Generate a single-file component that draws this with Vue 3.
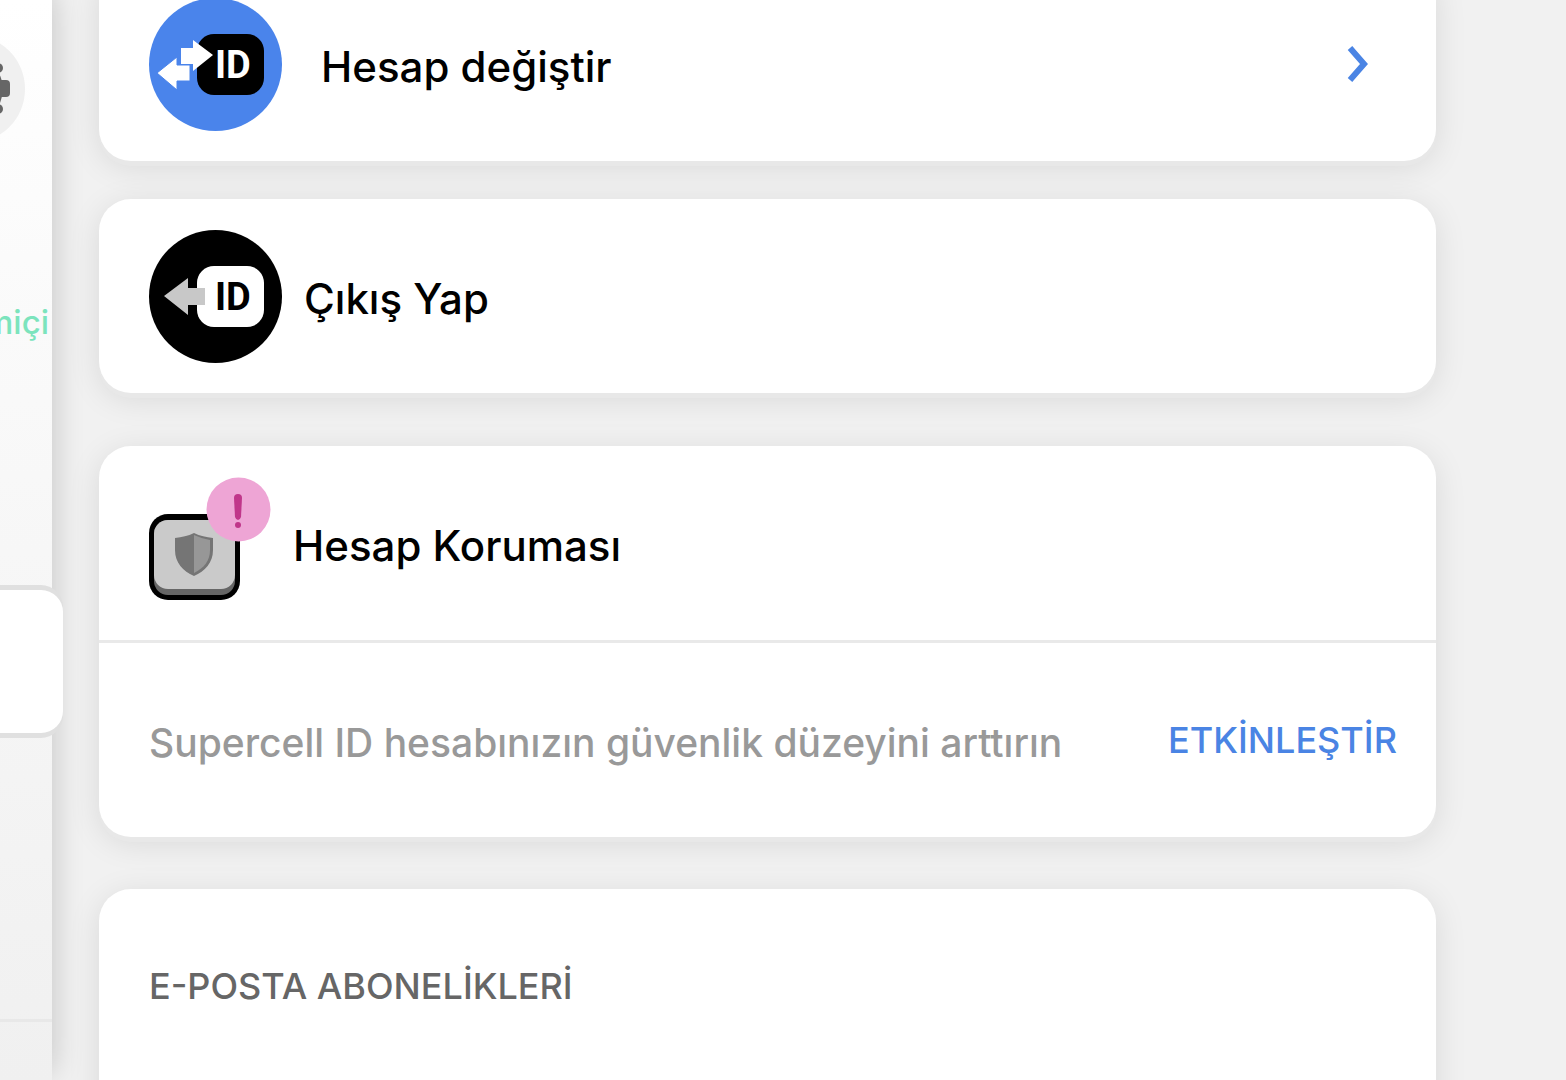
<template>
  <div class="app">
    <aside class="sidebar">
      <button type="button" class="btn-settings" aria-label="Ayarlar">
        <svg width="110" height="110" viewBox="0 0 110 110">
          <circle cx="55" cy="55" r="54" fill="#f0f0f0" />
          <g fill="#666">
            <circle cx="55" cy="55" r="32" />
            <rect x="16" y="46" width="78" height="17" rx="4" />
            <rect x="46" y="16" width="17" height="78" rx="4" />
            <circle v-for="(knob, index) in gearKnobs" :key="index" :cx="knob.x" :cy="knob.y" r="5" />
          </g>
          <circle cx="55" cy="55" r="13" fill="#f0f0f0" />
        </svg>
      </button>
      <span class="status">Çevrimiçi</span>
      <button type="button" class="tab-active" aria-label="Hesap"></button>
      <hr class="sidebar-line" />
    </aside>

    <main class="content">
      <button type="button" class="card row row-switch">
        <svg class="icon" width="133" height="133" viewBox="0 0 133 133" aria-hidden="true">
          <circle cx="66.5" cy="66.5" r="66.5" fill="#4a84eb" />
          <rect x="48" y="36" width="67" height="61" rx="17" fill="#000" />
          <path d="M32 50h12v-8l20 15-20 16v-7H32z" fill="#fff" />
          <path d="M8 75l20-16v8h13v16H28v9z" fill="#fff" stroke="#4a84eb" stroke-width="1" />
          <text class="logo-text" x="66" y="80" fill="#fff">ID</text>
        </svg>
        <span class="label">Hesap değiştir</span>
        <svg class="chevron" width="22" height="38" viewBox="0 0 22 38" aria-hidden="true">
          <path d="M3 2l14 16L3 34" fill="none" stroke="#4a84e4" stroke-width="6" />
        </svg>
      </button>

      <button type="button" class="card row row-logout">
        <svg class="icon" width="133" height="133" viewBox="0 0 133 133" aria-hidden="true">
          <circle cx="66.5" cy="66.5" r="66.5" fill="#000" />
          <rect x="48" y="36" width="67" height="61" rx="17" fill="#fff" />
          <path d="M15 66l24-18v10h17v17H39v10z" fill="#c8c8c8" />
          <text class="logo-text" x="66" y="80" fill="#000">ID</text>
        </svg>
        <span class="label">Çıkış Yap</span>
      </button>

      <section class="card">
        <div class="row row-protect">
          <svg class="icon" width="122" height="133" viewBox="0 0 122 133" aria-hidden="true">
            <rect x="0" y="37" width="91" height="86" rx="19" fill="#000" />
            <rect x="5" y="43" width="81" height="75" rx="14" fill="#666" />
            <rect x="5" y="43" width="81" height="69" rx="14" fill="#cacaca" />
            <path d="M45 56c6 3 12 4 19 5v12c0 13-8 21-19 26-11-5-19-13-19-26V61c7-1 13-2 19-5z" fill="#757575" />
            <path d="M45 58c5 2 10 4 16 5v10c0 11-6 18-16 23z" fill="#979797" />
            <circle cx="89.500" cy="32.500" r="32" fill="#eea5d5" />
            <path d="M85 21q0-4 4-4t4 4l-1 19q-1 3-3 3t-3-3z" fill="#c0368a" />
            <circle cx="89" cy="48" r="3" fill="#c0368a" />
          </svg>
          <h2 class="label">Hesap Koruması</h2>
        </div>
        <div class="protect-info">
          <p class="description">Supercell ID hesabınızın güvenlik düzeyini arttırın</p>
          <button type="button" class="btn-enable" @click="protectionEnabled = true">ETKİNLEŞTİR</button>
        </div>
      </section>

      <section class="card card-mail">
        <h2 class="section-title">E-POSTA ABONELİKLERİ</h2>
      </section>
    </main>
  </div>
</template>

<script setup>
import { ref } from "vue";

const gearKnobs = [
  { x: 82, y: 34 },
  { x: 82, y: 75 },
  { x: 28, y: 34 },
  { x: 28, y: 75 }
];
const protectionEnabled = ref(false);
</script>

<style>
body {
  margin: 0;
  background: #f1f1f1;
}
</style>

<style scoped>
.app {
  display: flex;
  height: 100vh;
  overflow: hidden;
  font-family: Inter, "Liberation Sans", sans-serif;
  font-weight: 500;
}

button {
  font: inherit;
  border: none;
  background: none;
  padding: 0;
  cursor: pointer;
}

svg {
  display: block;
  flex-shrink: 0;
}

.sidebar {
  position: relative;
  z-index: 1;
  width: 52px;
  flex-shrink: 0;
  display: flex;
  flex-direction: column;
  align-items: flex-end;
  background: linear-gradient(#fff, #fafafa 30%, #f0f0f0);
  box-shadow: 0 -8px 32px rgba(0, 0, 0, .2);
}

.btn-settings {
  margin: 34px 26px 0 0;
}

.status {
  margin: 158px 3px 0 0;
  font-size: 33px;
  line-height: 40px;
  color: #7ce4bd;
}

.tab-active {
  width: 126px;
  height: 143px;
  margin: 248px -11px 0 0;
  background: #fff;
  border-radius: 22px;
  box-shadow: 0 -5px 0 #e0e0e0, 0 5px 0 #e0e0e0;
}

.sidebar-line {
  width: 100%;
  height: 3px;
  margin: 286px 0 0;
  border: none;
  background: #e8e8e8;
}

.content {
  flex: 1;
  display: flex;
  flex-direction: column;
  margin-top: -33px;
  padding: 0 130px 0 47px;
}

.card {
  flex-shrink: 0;
  margin-bottom: 52px;
  background: #fff;
  border-radius: 32px;
  box-shadow: 0 5px 0 #e8e8e8, 0 6px 32px rgba(0, 0, 0, .1);
}

.row {
  display: flex;
  align-items: center;
  padding: 31px 50px 30px;
  color: #000;
  text-align: left;
}

.row-switch {
  gap: 39px;
  margin-bottom: 38px;
  padding-right: 67px;
}

.row-logout {
  gap: 22px;
  margin-bottom: 53px;
}

.row-protect {
  gap: 22px;
  border-bottom: 3px solid #e9e9e9;
}

.logo-text {
  font-family: Roboto, sans-serif;
  font-size: 38px;
  font-weight: 700;
}

.label {
  margin: 0;
  padding-top: 5px;
  font-size: 42px;
  font-weight: 500;
  line-height: 50px;
}

.chevron {
  margin-left: auto;
}

.protect-info {
  display: flex;
  align-items: center;
  justify-content: space-between;
  gap: 24px;
  padding: 72px 39px 72px 50px;
}

.description {
  margin: 0;
  padding-top: 5px;
  font-size: 39px;
  line-height: 45px;
  color: #999;
}

.btn-enable {
  font-size: 36px;
  line-height: 45px;
  color: #4a84e4;
}

.card-mail {
  min-height: 260px;
}

.section-title {
  margin: 0;
  padding: 75px 50px;
  font-size: 36px;
  font-weight: 500;
  line-height: 45px;
  color: #666;
}
</style>
